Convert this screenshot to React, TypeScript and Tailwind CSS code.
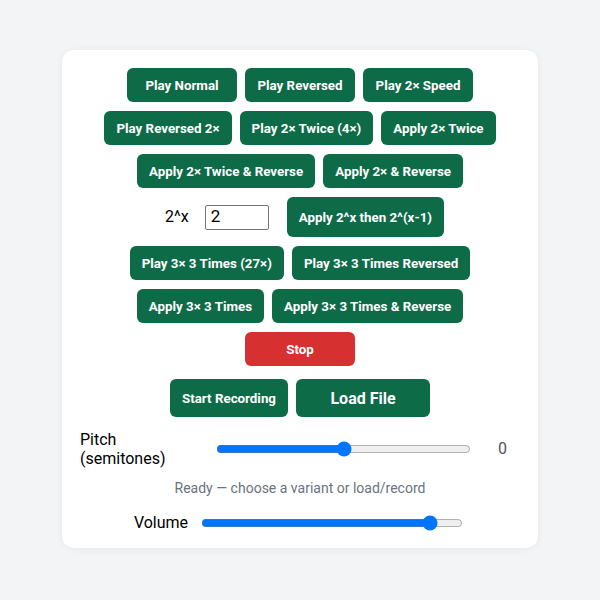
import React, { useState } from "react";

const G = "bg-[#0d6b47] text-white font-bold text-[13.33px] rounded-[6px] h-[34px] min-w-[110px] px-3 pt-[1px] flex items-center justify-center whitespace-nowrap";

export default function App() {
  const [x, setX] = useState("2");
  const [pitch, setPitch] = useState(0);
  const [vol, setVol] = useState(0.9);
  return (
    <div className="min-h-[600px] w-[600px] bg-[#f3f4f6] flex justify-center pt-[50px]" style={{ fontFamily: "Roboto, 'Liberation Sans', sans-serif" }}>
      <div className="w-[476px] h-[498px] bg-white rounded-[12px] shadow-[0_1px_6px_rgba(0,0,0,0.06)] pt-[18px] flex flex-col items-center">
        <div className="flex flex-col items-center gap-[9px]">
          <div className="flex gap-2">
            <button className={G}>Play Normal</button>
            <button className={G}>Play Reversed</button>
            <button className={G}>Play 2× Speed</button>
          </div>
          <div className="flex gap-2">
            <button className={G}>Play Reversed 2×</button>
            <button className={G}>Play 2× Twice (4×)</button>
            <button className={G}>Apply 2× Twice</button>
          </div>
          <div className="flex gap-2">
            <button className={G}>Apply 2× Twice &amp; Reverse</button>
            <button className={G}>Apply 2× &amp; Reverse</button>
          </div>
          <div className="flex items-center pl-[9px]">
            <span className="text-[16px] text-black mr-4">2^x</span>
            <input
              value={x}
              onChange={(e) => setX(e.target.value)}
              className="w-[64px] h-[25px] border border-[#767676] rounded-[2px] px-[5px] text-[17px] text-black mr-[18px] outline-none"
            />
            <button className={G + " !h-[40px] px-3"}>Apply 2^x then 2^(x-1)</button>
          </div>
          <div className="flex gap-2">
            <button className={G}>Play 3× 3 Times (27×)</button>
            <button className={G}>Play 3× 3 Times Reversed</button>
          </div>
          <div className="flex gap-2">
            <button className={G}>Apply 3× 3 Times</button>
            <button className={G}>Apply 3× 3 Times &amp; Reverse</button>
          </div>
          <button className="bg-[#d63031] text-white font-bold text-[13.33px] rounded-[6px] h-[34px] min-w-[110px] px-3 pt-[1px] flex items-center justify-center">Stop</button>
        </div>
        <div className="flex gap-2 mt-[13px]">
          <button className="bg-[#0d6b47] text-white font-bold text-[13.33px] rounded-[6px] h-[38px] w-[118px] pt-[1px] flex items-center justify-center whitespace-nowrap">Start Recording</button>
          <button className="bg-[#0d6b47] text-white font-bold text-[16px] rounded-[6px] h-[38px] w-[134px] pt-[1px] flex items-center justify-center whitespace-nowrap">Load File</button>
        </div>
        <div className="self-stretch flex items-center pl-[18px] mt-[13px]">
          <div className="w-[136px] text-[16px] leading-[19px] text-black">Pitch<br />(semitones)</div>
          <input
            type="range"
            min={-12}
            max={12}
            value={pitch}
            onChange={(e) => setPitch(Number(e.target.value))}
            className="w-[255px] m-0"
          />
          <span className="ml-[27px] text-[16px] text-[#555]">{pitch}</span>
        </div>
        <div className="mt-[10px] text-[14px] text-[#6b7280]">Ready — choose a variant or load/record</div>
        <div className="flex items-center gap-[13px] mt-[12px] pr-[3px]">
          <span className="text-[16px] text-black">Volume</span>
          <input
            type="range"
            min={0}
            max={1}
            step={0.01}
            value={vol}
            onChange={(e) => setVol(Number(e.target.value))}
            className="w-[262px] m-0"
          />
        </div>
      </div>
    </div>
  );
}
